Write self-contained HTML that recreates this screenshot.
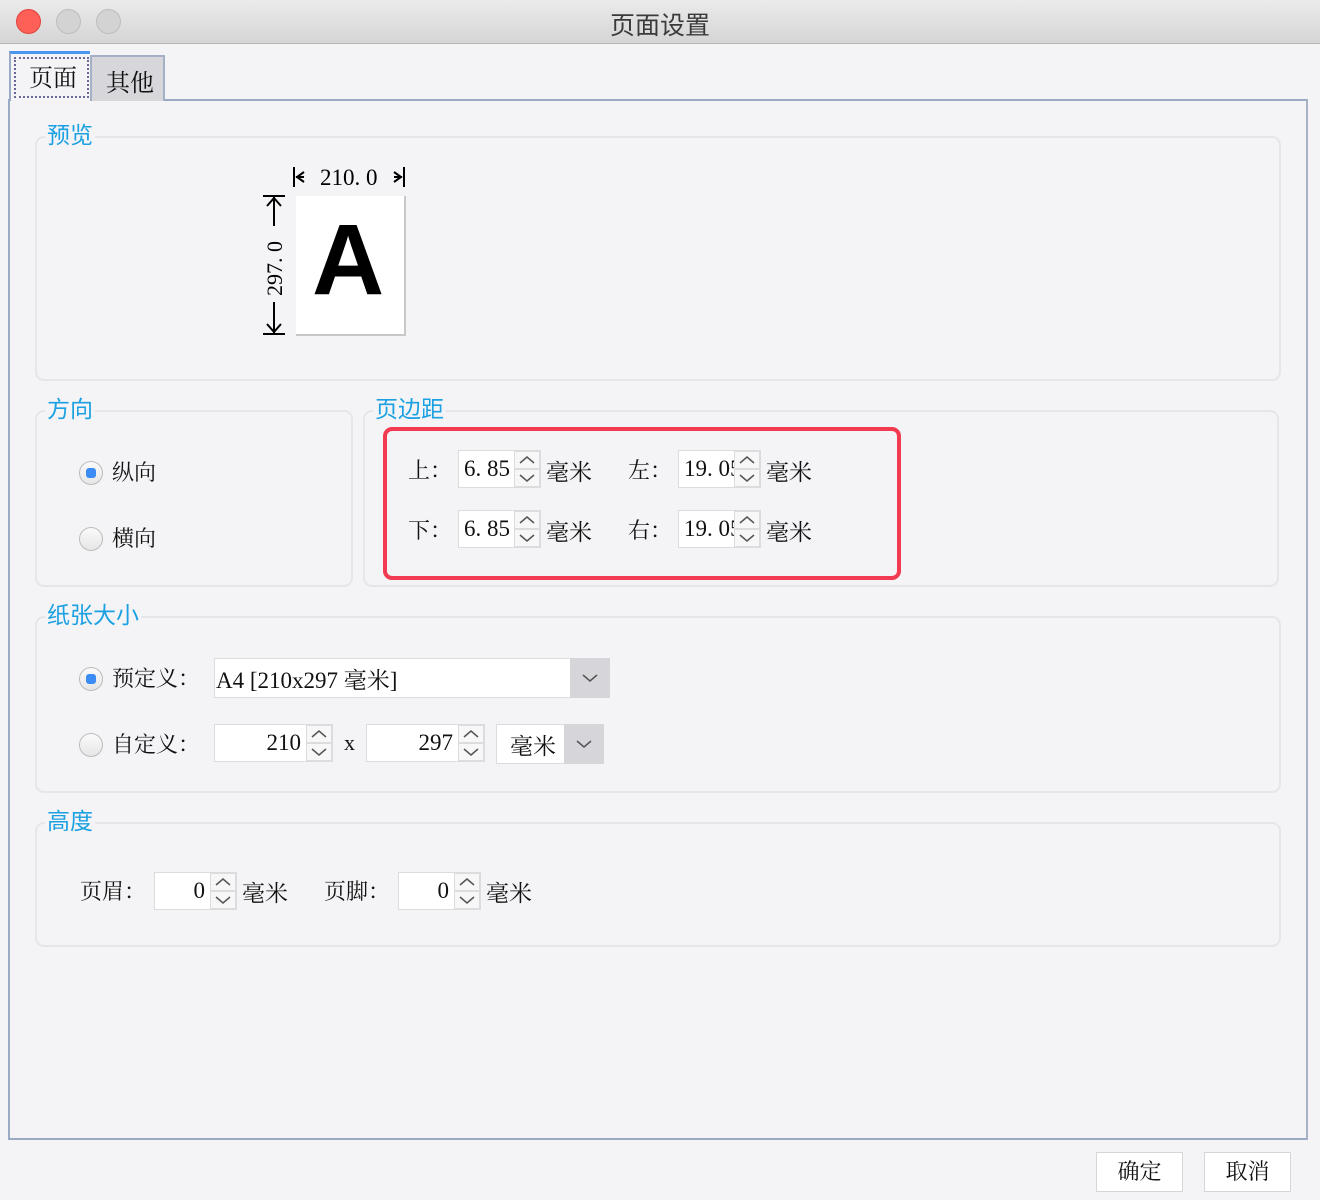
<!DOCTYPE html>
<html><head><meta charset="utf-8"><style>
*{margin:0;padding:0;box-sizing:border-box}
body{width:1320px;height:1200px;background:#f4f4f6;position:relative;overflow:hidden;font-family:"Liberation Serif","Noto Serif CJK SC",serif;font-size:22px;color:#111}
.a{position:absolute;white-space:nowrap}
.title{left:0;top:0;width:1320px;height:44px;background:linear-gradient(#ebebeb,#d5d5d5);border-bottom:1px solid #b4b4b4}
.dot{position:absolute;top:9px;width:25px;height:25px;border-radius:50%;background:#d3d3d3;border:1px solid #bdbdbd}
.grp{position:absolute;border:2px solid #e6e6ea;border-radius:9px}
.gt{position:absolute;color:#1ba1e2;font-family:"Liberation Sans","Noto Sans CJK SC",sans-serif;font-size:23px;background:#f4f4f6;padding:0 2px;line-height:26px}
.sp{position:absolute;height:38px;border:1px solid #dcdcdf;background:#fff}
.sp .t{position:absolute;left:0;top:0;bottom:0;line-height:36px;padding:0 5px;font-size:23px}
.sp .ar{position:absolute;right:0;top:0;width:26px;height:36px;background:#f4f4f6}
.sp .ar div{height:18px;border:1px solid #dcdcdf;background:#f7f7f8;display:flex;align-items:center;justify-content:center}
.radio{position:absolute;width:24px;height:24px;border-radius:50%;border:1px solid #bcbcbc;background:linear-gradient(#fafafa,#e6e6e6)}
.radio.on::after{content:"";position:absolute;left:6px;top:6px;width:10px;height:10px;border-radius:3px;background:#3b8cf5}
.btn{position:absolute;height:40px;border:1px solid #d6d6d9;background:#fff;text-align:center;line-height:38px}
</style></head><body>
<div class="a title"></div>
<div class="dot" style="left:16px;background:#fe5f57;border-color:#e0443e"></div>
<div class="dot" style="left:56px"></div>
<div class="dot" style="left:96px"></div>
<div class="a" style="left:0;width:1320px;top:6px;text-align:center;font-family:'Liberation Sans','Noto Sans CJK SC',sans-serif;font-size:25px;color:#3a3a3a">页面设置</div>

<!-- panel -->
<div class="a" style="left:8px;top:99px;width:1300px;height:1041px;border:2px solid #9aaac5;border-right-color:#a8b2c4"></div>
<!-- tabs -->
<div class="a" style="left:90px;top:55px;width:75px;height:46px;background:#d7d7db;border:2px solid #a4b0c6;border-bottom:none"></div>
<div class="a" style="left:106px;top:63px;font-size:24px">其他</div>
<div class="a" style="left:9px;top:51px;width:81px;height:50px;background:#f4f4f6;border-top:3px solid #4a95ee;border-left:2px solid #9aaac5"></div>
<div class="a" style="left:14px;top:57px;width:75px;height:41px;border:2px dotted #6a6a9a"></div>
<div class="a" style="left:29px;top:58px;font-size:24px">页面</div>

<!-- 预览 -->
<div class="grp" style="left:35px;top:136px;width:1246px;height:245px"></div>
<div class="gt" style="left:45px;top:122px">预览</div>
<div class="a" style="left:296px;top:196px;width:110px;height:140px;background:#fff;border-right:2px solid #c8c8c8;border-bottom:2px solid #c8c8c8"></div>
<div class="a" style="left:312px;top:210px;font-family:'Liberation Sans',sans-serif;font-weight:bold;font-size:100px;line-height:100px;color:#000">A</div>
<svg class="a" style="left:290px;top:165px" width="120" height="24"><path d="M4 2V22M6 12H14M14 7L7 12L14 17M114 2V22M112 12H104M104 7L111 12L104 17" stroke="#000" stroke-width="2" fill="none"/><text x="30" y="20" font-family="Liberation Serif" font-size="23">210. 0</text></svg>
<svg class="a" style="left:260px;top:194px" width="30" height="144"><path d="M3 2H25M3 140H25M14 3V32M14 108V139M7 12L14 4L21 12M7 130L14 138L21 130" stroke="#000" stroke-width="2" fill="none"/><text x="0" y="0" transform="translate(22,102) rotate(-90)" font-family="Liberation Serif" font-size="22">297. 0</text></svg>

<!-- 方向 -->
<div class="grp" style="left:35px;top:410px;width:318px;height:177px"></div>
<div class="gt" style="left:45px;top:396px">方向</div>
<div class="radio on" style="left:79px;top:461px"></div>
<div class="a" style="left:112px;top:456px">纵向</div>
<div class="radio" style="left:79px;top:527px"></div>
<div class="a" style="left:112px;top:522px">横向</div>

<!-- 页边距 -->
<div class="grp" style="left:363px;top:410px;width:916px;height:177px"></div>
<div class="gt" style="left:373px;top:396px">页边距</div>
<div class="a" style="left:383px;top:427px;width:518px;height:153px;border:4px solid #f23a50;border-radius:9px"></div>
<div class="a" style="left:408px;top:454px">上：</div>
<div class="a" style="left:408px;top:514px">下：</div>
<div class="a" style="left:628px;top:454px">左：</div>
<div class="a" style="left:628px;top:514px">右：</div>
<div class="a" style="left:546px;top:454px;font-size:23px">毫米</div>
<div class="a" style="left:546px;top:514px;font-size:23px">毫米</div>
<div class="a" style="left:766px;top:454px;font-size:23px">毫米</div>
<div class="a" style="left:766px;top:514px;font-size:23px">毫米</div>

<!-- 纸张大小 -->
<div class="grp" style="left:35px;top:616px;width:1246px;height:177px"></div>
<div class="gt" style="left:45px;top:602px">纸张大小</div>
<div class="radio on" style="left:79px;top:667px"></div>
<div class="a" style="left:112px;top:662px">预定义：</div>
<div class="a" style="left:214px;top:658px;width:396px;height:40px;background:#fff;border:1px solid #dcdcdf"></div>
<div class="a" style="left:570px;top:658px;width:40px;height:40px;background:#d6d6da"></div>
<div class="a" style="left:216px;top:662px;font-size:23px">A4 [210x297 毫米]</div>
<div class="radio" style="left:79px;top:733px"></div>
<div class="a" style="left:112px;top:728px">自定义：</div>
<div class="a" style="left:344px;top:730px">x</div>
<div class="a" style="left:496px;top:724px;width:108px;height:40px;background:#fff;border:1px solid #dcdcdf"></div>
<div class="a" style="left:564px;top:724px;width:40px;height:40px;background:#d6d6da"></div>
<div class="a" style="left:510px;top:728px;font-size:23px">毫米</div>

<!-- 高度 -->
<div class="grp" style="left:35px;top:822px;width:1246px;height:125px"></div>
<div class="gt" style="left:45px;top:808px">高度</div>
<div class="a" style="left:80px;top:875px">页眉：</div>
<div class="a" style="left:242px;top:875px;font-size:23px">毫米</div>
<div class="a" style="left:324px;top:875px">页脚：</div>
<div class="a" style="left:486px;top:875px;font-size:23px">毫米</div>

<div class="btn" style="left:1096px;top:1152px;width:87px">确定</div>
<div class="btn" style="left:1204px;top:1152px;width:87px">取消</div>

<svg width="0" height="0" style="position:absolute"><defs>
<path id="up" d="M-7 3L0-3L7 3" stroke="#555" stroke-width="1.5" fill="none"/>
<path id="dn" d="M-7-3L0 3L7-3" stroke="#555" stroke-width="1.5" fill="none"/>
</defs></svg>
<svg class="a" style="left:580px;top:670px" width="20" height="16"><path d="M3 5L10 11L17 5" stroke="#555" stroke-width="1.5" fill="none"/></svg>
<svg class="a" style="left:574px;top:736px" width="20" height="16"><path d="M3 5L10 11L17 5" stroke="#555" stroke-width="1.5" fill="none"/></svg>

<!-- spinners -->
<div class="sp" style="left:458px;top:450px;width:83px"><div class="t">6. 85</div><div class="ar"><div><svg width="16" height="8"><use href="#up" x="8" y="4"/></svg></div><div><svg width="16" height="8"><use href="#dn" x="8" y="4"/></svg></div></div></div>
<div class="sp" style="left:458px;top:510px;width:83px"><div class="t">6. 85</div><div class="ar"><div><svg width="16" height="8"><use href="#up" x="8" y="4"/></svg></div><div><svg width="16" height="8"><use href="#dn" x="8" y="4"/></svg></div></div></div>
<div class="sp" style="left:678px;top:450px;width:83px;overflow:hidden"><div class="t">19. 05</div><div class="ar"><div><svg width="16" height="8"><use href="#up" x="8" y="4"/></svg></div><div><svg width="16" height="8"><use href="#dn" x="8" y="4"/></svg></div></div></div>
<div class="sp" style="left:678px;top:510px;width:83px;overflow:hidden"><div class="t">19. 05</div><div class="ar"><div><svg width="16" height="8"><use href="#up" x="8" y="4"/></svg></div><div><svg width="16" height="8"><use href="#dn" x="8" y="4"/></svg></div></div></div>
<div class="sp" style="left:214px;top:724px;width:119px"><div class="t" style="left:auto;right:26px">210</div><div class="ar"><div><svg width="16" height="8"><use href="#up" x="8" y="4"/></svg></div><div><svg width="16" height="8"><use href="#dn" x="8" y="4"/></svg></div></div></div>
<div class="sp" style="left:366px;top:724px;width:119px"><div class="t" style="left:auto;right:26px">297</div><div class="ar"><div><svg width="16" height="8"><use href="#up" x="8" y="4"/></svg></div><div><svg width="16" height="8"><use href="#dn" x="8" y="4"/></svg></div></div></div>
<div class="sp" style="left:154px;top:872px;width:83px"><div class="t" style="left:auto;right:26px">0</div><div class="ar"><div><svg width="16" height="8"><use href="#up" x="8" y="4"/></svg></div><div><svg width="16" height="8"><use href="#dn" x="8" y="4"/></svg></div></div></div>
<div class="sp" style="left:398px;top:872px;width:83px"><div class="t" style="left:auto;right:26px">0</div><div class="ar"><div><svg width="16" height="8"><use href="#up" x="8" y="4"/></svg></div><div><svg width="16" height="8"><use href="#dn" x="8" y="4"/></svg></div></div></div>
</body></html>
